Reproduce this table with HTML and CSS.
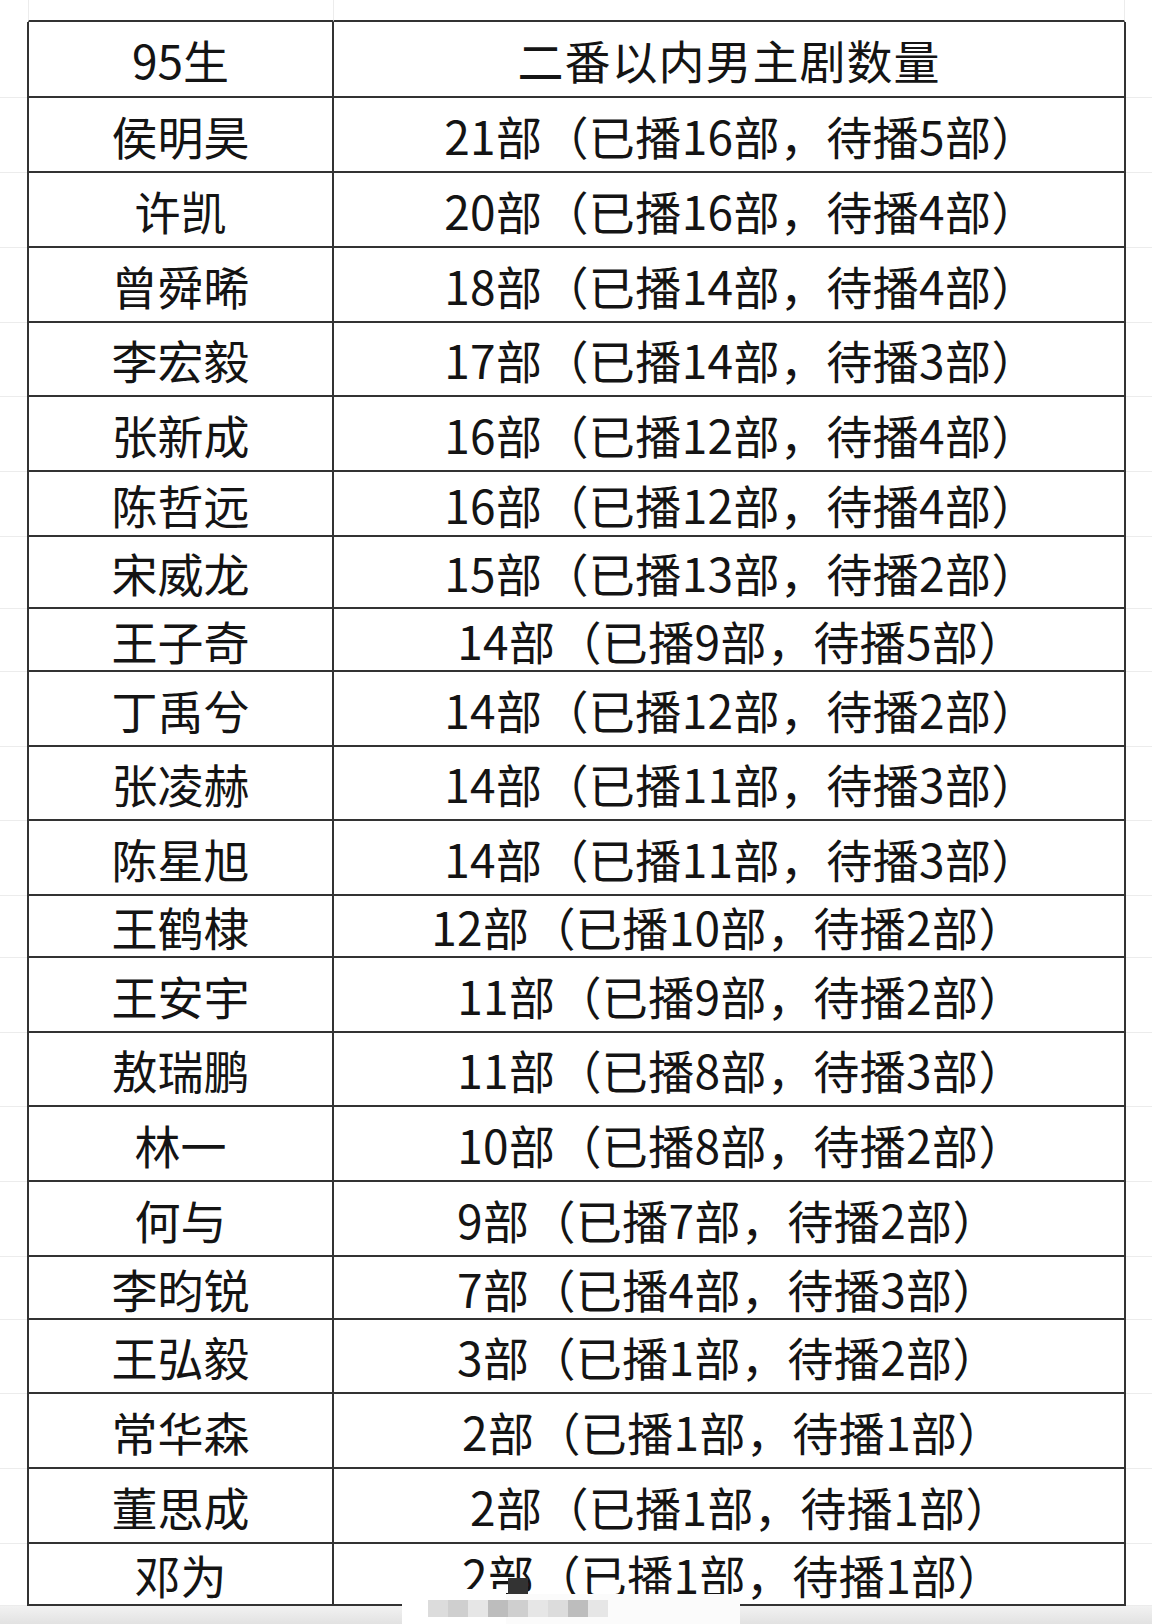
FILE: index.html
```html
<!DOCTYPE html>
<html lang="zh-CN">
<head>
<meta charset="utf-8">
<title>95生 二番以内男主剧数量</title>
<link rel="stylesheet" href="styles.css">
</head>
<body>
<div class="sheet">
  <div class="row top">
    <div class="m"></div><div class="c1 blank"></div><div class="c2 blank"></div><div class="m last"></div>
  </div>
  <div class="row head h76">
    <div class="m"></div><div class="c1">95生</div><div class="c2 title">二番以内男主剧数量</div><div class="m last"></div>
  </div>
  <div class="row h75"><div class="m"></div><div class="c1">侯明昊</div><div class="c2">21部（已播16部，待播5部）</div><div class="m last"></div></div>
  <div class="row h75"><div class="m"></div><div class="c1">许凯</div><div class="c2">20部（已播16部，待播4部）</div><div class="m last"></div></div>
  <div class="row h75"><div class="m"></div><div class="c1">曾舜晞</div><div class="c2">18部（已播14部，待播4部）</div><div class="m last"></div></div>
  <div class="row h74"><div class="m"></div><div class="c1">李宏毅</div><div class="c2">17部（已播14部，待播3部）</div><div class="m last"></div></div>
  <div class="row h75"><div class="m"></div><div class="c1">张新成</div><div class="c2">16部（已播12部，待播4部）</div><div class="m last"></div></div>
  <div class="row h65"><div class="m"></div><div class="c1">陈哲远</div><div class="c2">16部（已播12部，待播4部）</div><div class="m last"></div></div>
  <div class="row h72"><div class="m"></div><div class="c1">宋威龙</div><div class="c2">15部（已播13部，待播2部）</div><div class="m last"></div></div>
  <div class="row h63"><div class="m"></div><div class="c1">王子奇</div><div class="c2">14部（已播9部，待播5部）</div><div class="m last"></div></div>
  <div class="row h75"><div class="m"></div><div class="c1">丁禹兮</div><div class="c2">14部（已播12部，待播2部）</div><div class="m last"></div></div>
  <div class="row h74"><div class="m"></div><div class="c1">张凌赫</div><div class="c2">14部（已播11部，待播3部）</div><div class="m last"></div></div>
  <div class="row h75"><div class="m"></div><div class="c1">陈星旭</div><div class="c2">14部（已播11部，待播3部）</div><div class="m last"></div></div>
  <div class="row h62"><div class="m"></div><div class="c1">王鹤棣</div><div class="c2 shift">12部（已播10部，待播2部）</div><div class="m last"></div></div>
  <div class="row h75"><div class="m"></div><div class="c1">王安宇</div><div class="c2">11部（已播9部，待播2部）</div><div class="m last"></div></div>
  <div class="row h74"><div class="m"></div><div class="c1">敖瑞鹏</div><div class="c2">11部（已播8部，待播3部）</div><div class="m last"></div></div>
  <div class="row h75"><div class="m"></div><div class="c1">林一</div><div class="c2">10部（已播8部，待播2部）</div><div class="m last"></div></div>
  <div class="row h75"><div class="m"></div><div class="c1">何与</div><div class="c2 shift">9部（已播7部，待播2部）</div><div class="m last"></div></div>
  <div class="row h63"><div class="m"></div><div class="c1">李昀锐</div><div class="c2 shift">7部（已播4部，待播3部）</div><div class="m last"></div></div>
  <div class="row h74"><div class="m"></div><div class="c1">王弘毅</div><div class="c2 shift">3部（已播1部，待播2部）</div><div class="m last"></div></div>
  <div class="row h75"><div class="m"></div><div class="c1">常华森</div><div class="c2 shift-s">2部（已播1部，待播1部）</div><div class="m last"></div></div>
  <div class="row h75"><div class="m"></div><div class="c1">董思成</div><div class="c2">2部（已播1部，待播1部）</div><div class="m last"></div></div>
  <div class="row h62"><div class="m"></div><div class="c1">邓为</div><div class="c2 shift-s">2部（已播1部，待播1部）</div><div class="m last"></div></div>
  <div class="foot"></div>

  <div class="mask">
    <div class="mask-a"></div>
    <div class="mask-b"></div>
    <div class="dot"></div>
    <div class="tiles">
      <span class="t1"></span><span class="t2"></span><span class="t3"></span><span class="t4"></span><span class="t2"></span><span class="t3"></span><span class="t1"></span><span class="t4"></span><span class="t3"></span>
    </div>
  </div>
</div>
</body>
</html>
```
FILE: styles.css
```css
html, body {
  margin: 0;
  padding: 0;
  background: #ffffff;
}

.sheet {
  position: relative;
  width: 1152px;
  height: 1624px;
  overflow: hidden;
  font-family: "Noto Sans CJK SC", "Noto Sans", sans-serif;
  color: #141414;
}

.row {
  display: grid;
  grid-template-columns: 27px 307px 792px 26px;
  box-sizing: border-box;
}

.row.top { height: 22px; }
.h76 { height: 76px; }
.h75 { height: 75px; }
.h74 { height: 74px; }
.h72 { height: 72px; }
.h65 { height: 65px; }
.h63 { height: 63px; }
.h62 { height: 62px; }

.m {
  box-sizing: border-box;
  border-bottom: 1px solid #ececec;
}
.row.top .m { border-bottom: none; }

.c1, .c2 {
  box-sizing: border-box;
  display: flex;
  align-items: center;
  justify-content: center;
  font-size: 46px;
  line-height: 1;
  white-space: nowrap;
  border-bottom: 2px solid #333333;
}

.c1 {
  border-left: 2px solid #333333;
  border-right: 2px solid #333333;
}
.c2 {
  border-right: 2px solid #333333;
  padding-left: 24px;
  letter-spacing: 0.4px;
}
.c2.title { padding-left: 0; letter-spacing: 1px; }
.c2.shift { padding-left: 0; padding-right: 2px; }
.c2.shift-s { padding-left: 8px; }

.row.top .c1, .row.top .c2 {
  border-bottom: 2px solid #333333;
}
.row.top .c1.blank {
  border-left: 1px solid #ececec;
  border-right: 1px solid #ececec;
  margin-left: 1px;
  padding: 0;
}
.row.top .c2.blank {
  border-right: 1px solid #ececec;
  border-left: none;
  margin-right: 1px;
  padding: 0;
}

.foot {
  height: 18px;
  background: linear-gradient(#f2f2f2, #e2e2e2);
}

/* watermark mosaic covering the bottom of the last row */
.mask {
  position: absolute;
  left: 0;
  top: 0;
  width: 0;
  height: 0;
}
.mask-a {
  position: absolute;
  left: 402px;
  top: 1589px;
  width: 104px;
  height: 35px;
  background: #ffffff;
}
.mask-b {
  position: absolute;
  left: 506px;
  top: 1594px;
  width: 234px;
  height: 30px;
  background: #fbfbfb;
}
.dot {
  position: absolute;
  left: 508px;
  top: 1578px;
  width: 20px;
  height: 16px;
  background: #333333;
}
.tiles {
  position: absolute;
  left: 428px;
  top: 1600px;
  display: flex;
  height: 17px;
}
.tiles span {
  display: block;
  width: 20px;
  height: 17px;
}
.tiles .t1 { background: #dcdcdc; }
.tiles .t2 { background: #cfcfcf; }
.tiles .t3 { background: #e6e6e6; }
.tiles .t4 { background: #bdbdbd; }
```
